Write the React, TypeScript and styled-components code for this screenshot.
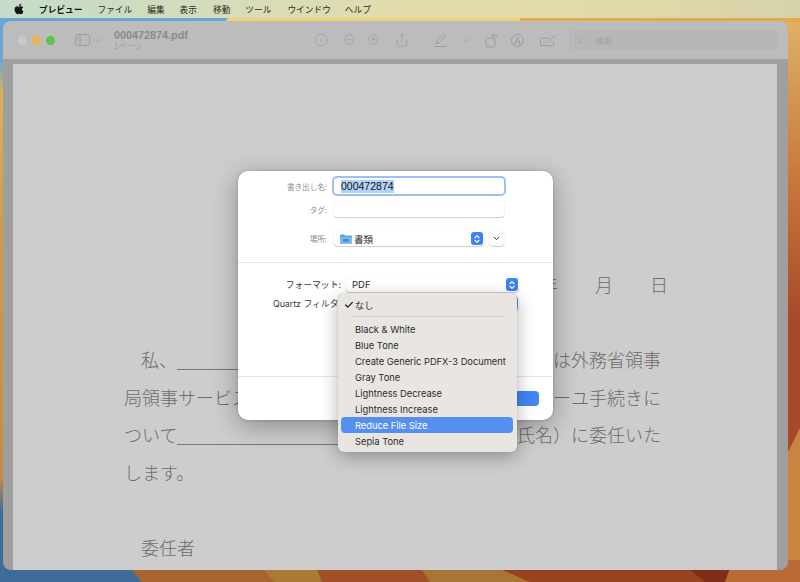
import React from 'react';
import styled, { createGlobalStyle } from 'styled-components';
import { FaApple } from 'react-icons/fa';
import { Check, ChevronDown, ChevronsUpDown, Info, Search, Share, ZoomIn, ZoomOut } from 'lucide-react';

const GlobalStyle = createGlobalStyle`
  html, body { margin: 0; padding: 0; background: #3f6b9b; }
  * { box-sizing: border-box; }
  body { font-family: Inter, "Noto Sans CJK JP", sans-serif; }
`;

const Desktop = styled.div`
  position: relative;
  width: 800px;
  height: 582px;
  overflow: hidden;
`;

const Wallpaper = styled.svg`
  position: absolute;
  inset: 0;
`;

const MenuBar = styled.div`
  position: relative;
  display: flex;
  align-items: center;
  height: 18px;
  padding-left: 13px;
  background: linear-gradient(90deg, #c3dcca 0%, #d4dcbc 25%, #e2dcac 50%, #e0daa8 80%, #d6d2aa 100%);
  font-family: "Noto Sans CJK JP", sans-serif;
  font-size: 8.7px;
  color: #2a2a26;
`;

const MenuTitle = styled.span<{ $ml: number; $bold?: boolean }>`
  margin-left: ${({ $ml }) => $ml}px;
  font-weight: ${({ $bold }) => ($bold ? 700 : 400)};
  color: ${({ $bold }) => ($bold ? '#111' : '#2a2a26')};
`;

const Window = styled.div`
  position: relative;
  display: flex;
  flex-direction: column;
  width: 785px;
  height: 549px;
  margin: 3px 0 0 3px;
  border-radius: 8px;
  overflow: hidden;
  background: #9f9f9f;
`;

const Toolbar = styled.div`
  display: flex;
  align-items: center;
  flex: none;
  height: 38px;
  padding-left: 15px;
  background: #bcbcbc;
  color: #9c9c9c;
`;

const Lights = styled.div`
  display: flex;
  gap: 5px;
`;

const Light = styled.span<{ $color: string }>`
  width: 9px;
  height: 9px;
  border-radius: 50%;
  background: ${({ $color }) => $color};
`;

const Slot = styled.span<{ $ml: number; $w?: number }>`
  display: flex;
  align-items: center;
  justify-content: center;
  flex: none;
  margin-left: ${({ $ml }) => $ml}px;
  width: ${({ $w }) => $w ?? 16}px;
`;

const TitleBlock = styled.div`
  display: flex;
  flex-direction: column;
  width: 100px;
  margin-left: 9px;
  margin-top: -1px;
`;

const FileName = styled.span`
  font-family: "Liberation Sans", sans-serif;
  font-size: 10.8px;
  line-height: 12px;
  font-weight: 700;
  color: #8a8a8a;
`;

const PageCount = styled.span`
  font-family: "Noto Sans CJK JP", sans-serif;
  font-size: 8px;
  line-height: 10px;
  color: #a2a2a2;
`;

const SearchBox = styled.div`
  display: flex;
  align-items: center;
  gap: 2px;
  width: 209px;
  height: 20px;
  margin-left: 13px;
  padding-left: 5px;
  border-radius: 5px;
  background: #b8b7b5;
  font-family: "Noto Sans CJK JP", sans-serif;
  font-size: 8.5px;
  color: #a0a0a0;
`;

const DocArea = styled.div`
  flex: 1;
  padding: 5px 11px 0 10px;
`;

const Page = styled.div`
  height: 100%;
  padding: 202px 116px 0 111px;
  background: #cdcdcd;
  font-family: "Noto Sans CJK JP", sans-serif;
  font-size: 18px;
  font-weight: 300;
  color: #6c6c6c;
`;

const Line = styled.div<{ $indent?: boolean }>`
  display: flex;
  align-items: center;
  height: 37.5px;
  line-height: 37.5px;
  white-space: nowrap;
  padding-left: ${({ $indent }) => ($indent ? 17 : 0)}px;
`;

const SplitLine = styled(Line)`
  justify-content: space-between;
`;

const DateLine = styled(Line)`
  justify-content: flex-end;
  gap: 37px;
  margin-right: -7px;
`;

const Rule = styled.span`
  flex: 1;
  align-self: flex-end;
  margin-bottom: 9px;
  border-bottom: 1px solid #777;
`;

const Dialog = styled.div`
  position: absolute;
  left: 238px;
  top: 171px;
  width: 315px;
  height: 249px;
  display: flex;
  flex-direction: column;
  border-radius: 10px;
  background: #fff;
  box-shadow: 0 6px 26px rgba(0, 0, 0, 0.32), 0 0 3px rgba(0, 0, 0, 0.2);
`;

const NameSection = styled.div`
  flex: none;
  height: 92px;
  padding-top: 7px;
  border-bottom: 1px solid #e6e6e6;
`;

const OptionsSection = styled.div`
  flex: none;
  height: 114px;
  padding-top: 14px;
  border-bottom: 1px solid #e6e6e6;
`;

const Footer = styled.div`
  flex: 1;
  display: flex;
  justify-content: flex-end;
  padding: 14px 14px 0 0;
`;

const FormRow = styled.div<{ $h: number; $mt?: number; $label: number; $gap: number }>`
  display: grid;
  grid-template-columns: ${({ $label }) => $label}px auto;
  column-gap: ${({ $gap }) => $gap}px;
  align-items: center;
  height: ${({ $h }) => $h}px;
  margin-top: ${({ $mt }) => $mt ?? 0}px;
`;

const FieldLabel = styled.span`
  text-align: right;
  font-family: "Noto Sans CJK JP", sans-serif;
  font-size: 7.6px;
  color: #8b8b8b;
  white-space: nowrap;
`;

const OptionLabel = styled(FieldLabel)`
  font-family: Inter, "Noto Sans CJK JP", sans-serif;
  font-size: 8.8px;
  color: #3a3a3a;
`;

const FocusField = styled.div`
  display: flex;
  align-items: center;
  width: 170px;
  height: 16px;
  padding-left: 7px;
  border-radius: 3px;
  background: #fff;
  box-shadow: 0 0 0 2px #9dbff3;
  font-family: "Liberation Sans", sans-serif;
  font-size: 10.5px;
  color: #111;
`;

const Selected = styled.span`
  background: #b4d2f7;
  line-height: 13px;
`;

const EmptyField = styled.div`
  width: 170px;
  height: 15px;
  border-radius: 3px;
  background: #fff;
  box-shadow: 0 1px 1px rgba(0, 0, 0, 0.18), 0 0 1px rgba(0, 0, 0, 0.2);
`;

const PlaceRow = styled.div`
  display: flex;
  align-items: center;
  gap: 5px;
`;

const PopUp = styled.div<{ $w: number }>`
  display: flex;
  align-items: center;
  width: ${({ $w }) => $w}px;
  height: 15px;
  padding: 0 1px 0 6px;
  border-radius: 4px;
  background: #fff;
  box-shadow: 0 1px 1px rgba(0, 0, 0, 0.18), 0 0 1px rgba(0, 0, 0, 0.22);
  font-family: Inter, "Noto Sans CJK JP", sans-serif;
  font-size: 9.5px;
  color: #2a2a2a;
`;

const PopUpText = styled.span<{ $ml?: number }>`
  flex: 1;
  margin-left: ${({ $ml }) => $ml ?? 0}px;
`;

const Stepper = styled.span`
  display: flex;
  align-items: center;
  justify-content: center;
  width: 12px;
  height: 13px;
  border-radius: 3px;
  background: #3f83f0;
  color: #fff;
`;

const DisclosureButton = styled.span`
  display: flex;
  align-items: center;
  justify-content: center;
  width: 15px;
  height: 15px;
  border-radius: 4px;
  background: #fff;
  box-shadow: 0 1px 1px rgba(0, 0, 0, 0.18), 0 0 1px rgba(0, 0, 0, 0.22);
  color: #222;
`;

const PrimaryButton = styled.button`
  width: 65px;
  height: 15px;
  padding: 0;
  border: none;
  border-radius: 4px;
  background: #4287f5;
`;

const FilterMenu = styled.div`
  position: absolute;
  left: 100px;
  top: 122px;
  width: 179px;
  height: 159px;
  padding-top: 4px;
  border-radius: 6px;
  background: #e9e6e2;
  box-shadow: 0 5px 18px rgba(0, 0, 0, 0.3), 0 0 1px rgba(0, 0, 0, 0.3);
  font-family: Inter, "Noto Sans CJK JP", sans-serif;
  font-size: 9.3px;
  color: #2b2b2b;
`;

const MenuItem = styled.div<{ $active?: boolean }>`
  position: relative;
  display: flex;
  align-items: center;
  height: 16px;
  margin: 0 4px 0 3px;
  padding-left: 14px;
  border-radius: 4px;
  white-space: nowrap;
  background: ${({ $active }) => ($active ? '#5590f0' : 'transparent')};
  color: ${({ $active }) => ($active ? '#fff' : 'inherit')};
`;

const CheckMark = styled.span`
  position: absolute;
  left: 3px;
  top: 3px;
  display: flex;
`;

const MenuSeparator = styled.div`
  height: 1px;
  margin: 3px 12px 4px 13px;
  background: #d4d1cd;
`;

const filters = [
  'Black & White',
  'Blue Tone',
  'Create Generic PDFX-3 Document',
  'Gray Tone',
  'Lightness Decrease',
  'Lightness Increase',
  'Reduce File Size',
  'Sepia Tone',
];

const menus = [
  { label: 'ファイル', ml: 15 },
  { label: '編集', ml: 15 },
  { label: '表示', ml: 15 },
  { label: '移動', ml: 16 },
  { label: 'ツール', ml: 15 },
  { label: 'ウインドウ', ml: 16 },
  { label: 'ヘルプ', ml: 14 },
];

const SidebarIcon = () => (
  <svg width="15" height="12" viewBox="0 0 15 12" fill="none" stroke="currentColor" strokeWidth="1">
    <rect x="0.5" y="0.5" width="14" height="11" rx="2" />
    <path d="M5 1v10M2 3.2h1.5M2 5h1.5M2 6.8h1.5" />
  </svg>
);

const PenIcon = () => (
  <svg width="15" height="15" viewBox="0 0 15 15" fill="none" stroke="currentColor" strokeWidth="1">
    <path d="M3 10.5 3.6 8 10 1.6a1.2 1.2 0 0 1 1.7 0l.4.4a1.2 1.2 0 0 1 0 1.7L5.7 10z" />
    <path d="M1 13.5h13" />
  </svg>
);

const RotateIcon = () => (
  <svg width="15" height="15" viewBox="0 0 15 15" fill="none" stroke="currentColor" strokeWidth="1">
    <rect x="1" y="5" width="9" height="9" rx="1.2" />
    <path d="M6.5 2.2h3.3A3.2 3.2 0 0 1 13 5.4M8.5.6 6.7 2.2l1.8 1.6" />
  </svg>
);

const MarkupIcon = () => (
  <svg width="13" height="13" viewBox="0 0 13 13" fill="none" stroke="currentColor" strokeWidth="1">
    <circle cx="6.5" cy="6.5" r="6" />
    <path d="M3.8 10.6 6.5 3l2.7 7.6M4.9 8h3.2" />
  </svg>
);

const SignIcon = () => (
  <svg width="17" height="13" viewBox="0 0 17 13" fill="none" stroke="currentColor" strokeWidth="1">
    <path d="M11 4H1.5a1 1 0 0 0-1 1v6a1 1 0 0 0 1 1h12a1 1 0 0 0 1-1V7" />
    <path d="M3 8.5h.8M5 8.5h.8M7 8.5h.8M9 9l7-8" />
  </svg>
);

const FolderIcon = () => (
  <svg width="12" height="10" viewBox="0 0 12 10">
    <path d="M0 1.5A1 1 0 0 1 1 .5h3l1 1h6a1 1 0 0 1 1 1V9a1 1 0 0 1-1 1H1a1 1 0 0 1-1-1z" fill="#5ba4e6" />
    <rect x="0" y="3" width="12" height="7" rx="1" fill="#7dbbef" />
    <path d="M3 5h6v3H3z" fill="#4a8fd0" />
  </svg>
);

const UpDown = () => <ChevronsUpDown size={10} strokeWidth={2.6} />;

const App: React.FC = () => {
  return (
    <Desktop>
      <GlobalStyle />
      <Wallpaper width="800" height="582" viewBox="0 0 800 582">
        <defs>
          <linearGradient id="left" x1="0" y1="0" x2="0" y2="1">
            <stop offset="0.1" stopColor="#6ba5d6" />
            <stop offset="0.16" stopColor="#d9b352" />
            <stop offset="0.4" stopColor="#cf9c4a" />
            <stop offset="0.82" stopColor="#c58b45" />
            <stop offset="0.88" stopColor="#3f6b9b" />
          </linearGradient>
          <linearGradient id="right" x1="0" y1="0" x2="0" y2="1">
            <stop offset="0.03" stopColor="#dfb266" />
            <stop offset="0.3" stopColor="#c9793a" />
            <stop offset="0.55" stopColor="#a8482a" />
            <stop offset="0.75" stopColor="#a8482a" />
          </linearGradient>
        </defs>
        <rect width="400" height="582" fill="url(#left)" />
        <rect x="400" width="400" height="582" fill="url(#right)" />
        <path d="M0 18H228L225 22H0z" fill="#6ba5d6" />
        <path d="M228 18H520V22H225z" fill="#f0d274" />
        <path d="M520 18H800V22H520z" fill="#e5a94c" />
        <path d="M788 452 800 428V582H788z" fill="#c98540" />
        <path d="M0 560H122L142 582H0z" fill="#3f6b9b" />
        <path d="M122 560H314L322 582H142z" fill="#a8642f" />
        <path d="M255 560H314L322 582H275z" fill="#ab7a35" />
        <path d="M314 560H415L430 582H322z" fill="#a04f28" />
        <path d="M415 560H480L530 582H430z" fill="#a87535" />
        <path d="M480 560H678L705 582H530z" fill="#98421f" />
        <path d="M678 560H733L725 582H705z" fill="#7f2c18" />
        <path d="M733 560H800V582H725z" fill="#b96a35" />
      </Wallpaper>

      <MenuBar>
        <FaApple size={12} color="#111" />
        <MenuTitle $ml={14} $bold>プレビュー</MenuTitle>
        {menus.map(menu => (
          <MenuTitle key={menu.label} $ml={menu.ml}>{menu.label}</MenuTitle>
        ))}
      </MenuBar>

      <Window>
        <Toolbar>
          <Lights>
            <Light $color="#c9c9c9" />
            <Light $color="#e5b44f" />
            <Light $color="#5cc34f" />
          </Lights>
          <Slot $ml={19}><SidebarIcon /></Slot>
          <Slot $ml={1} $w={14}><ChevronDown size={9} /></Slot>
          <TitleBlock>
            <FileName>000472874.pdf</FileName>
            <PageCount>1ページ</PageCount>
          </TitleBlock>
          <Slot $ml={99}><Info size={14} strokeWidth={1.2} /></Slot>
          <Slot $ml={13}><ZoomOut size={14} strokeWidth={1.2} /></Slot>
          <Slot $ml={8}><ZoomIn size={14} strokeWidth={1.2} /></Slot>
          <Slot $ml={12}><Share size={14} strokeWidth={1.2} /></Slot>
          <Slot $ml={22}><PenIcon /></Slot>
          <Slot $ml={10}><ChevronDown size={9} /></Slot>
          <Slot $ml={10}><RotateIcon /></Slot>
          <Slot $ml={9}><MarkupIcon /></Slot>
          <Slot $ml={15}><SignIcon /></Slot>
          <SearchBox>
            <Search size={9} strokeWidth={1.4} />
            <ChevronDown size={6} strokeWidth={2} />
            <span>&nbsp;検索</span>
          </SearchBox>
        </Toolbar>
        <DocArea>
          <Page>
            <DateLine>
              <span>年</span>
              <span>月</span>
              <span>日</span>
            </DateLine>
            <Line />
            <Line $indent>
              <span>私、</span>
              <Rule />
              <span>は外務省領事</span>
            </Line>
            <SplitLine>
              <span>局領事サービス</span>
              <span>ーユ手続きに</span>
            </SplitLine>
            <Line>
              <span>ついて</span>
              <Rule />
              <span>（氏名）に委任いた</span>
            </Line>
            <Line>します。</Line>
            <Line />
            <Line $indent>委任者</Line>
          </Page>
        </DocArea>
      </Window>

      <Dialog>
        <NameSection>
          <FormRow $h={16} $label={89} $gap={7}>
            <FieldLabel>書き出し名:</FieldLabel>
            <FocusField><Selected>000472874</Selected></FocusField>
          </FormRow>
          <FormRow $h={15} $mt={8} $label={89} $gap={7}>
            <FieldLabel>タグ:</FieldLabel>
            <EmptyField />
          </FormRow>
          <FormRow $h={15} $mt={14} $label={89} $gap={7}>
            <FieldLabel>場所:</FieldLabel>
            <PlaceRow>
              <PopUp $w={150}>
                <FolderIcon />
                <PopUpText $ml={2}>書類</PopUpText>
                <Stepper><UpDown /></Stepper>
              </PopUp>
              <DisclosureButton><ChevronDown size={9} strokeWidth={2.6} /></DisclosureButton>
            </PlaceRow>
          </FormRow>
        </NameSection>
        <OptionsSection>
          <FormRow $h={15} $label={103} $gap={5}>
            <OptionLabel>フォーマット:</OptionLabel>
            <PopUp $w={173}>
              <PopUpText>PDF</PopUpText>
              <Stepper><UpDown /></Stepper>
            </PopUp>
          </FormRow>
          <FormRow $h={15} $mt={4} $label={103} $gap={5}>
            <OptionLabel>Quartz フィルタ:</OptionLabel>
            <PopUp $w={173}>
              <PopUpText />
              <Stepper><UpDown /></Stepper>
            </PopUp>
          </FormRow>
        </OptionsSection>
        <Footer>
          <PrimaryButton aria-label="保存" />
        </Footer>
        <FilterMenu>
          <MenuItem>
            <CheckMark><Check size={10} strokeWidth={3} color="#222" /></CheckMark>
            なし
          </MenuItem>
          <MenuSeparator />
          {filters.map(name => (
            <MenuItem key={name} $active={name === 'Reduce File Size'}>{name}</MenuItem>
          ))}
        </FilterMenu>
      </Dialog>
    </Desktop>
  );
};

export default App;
